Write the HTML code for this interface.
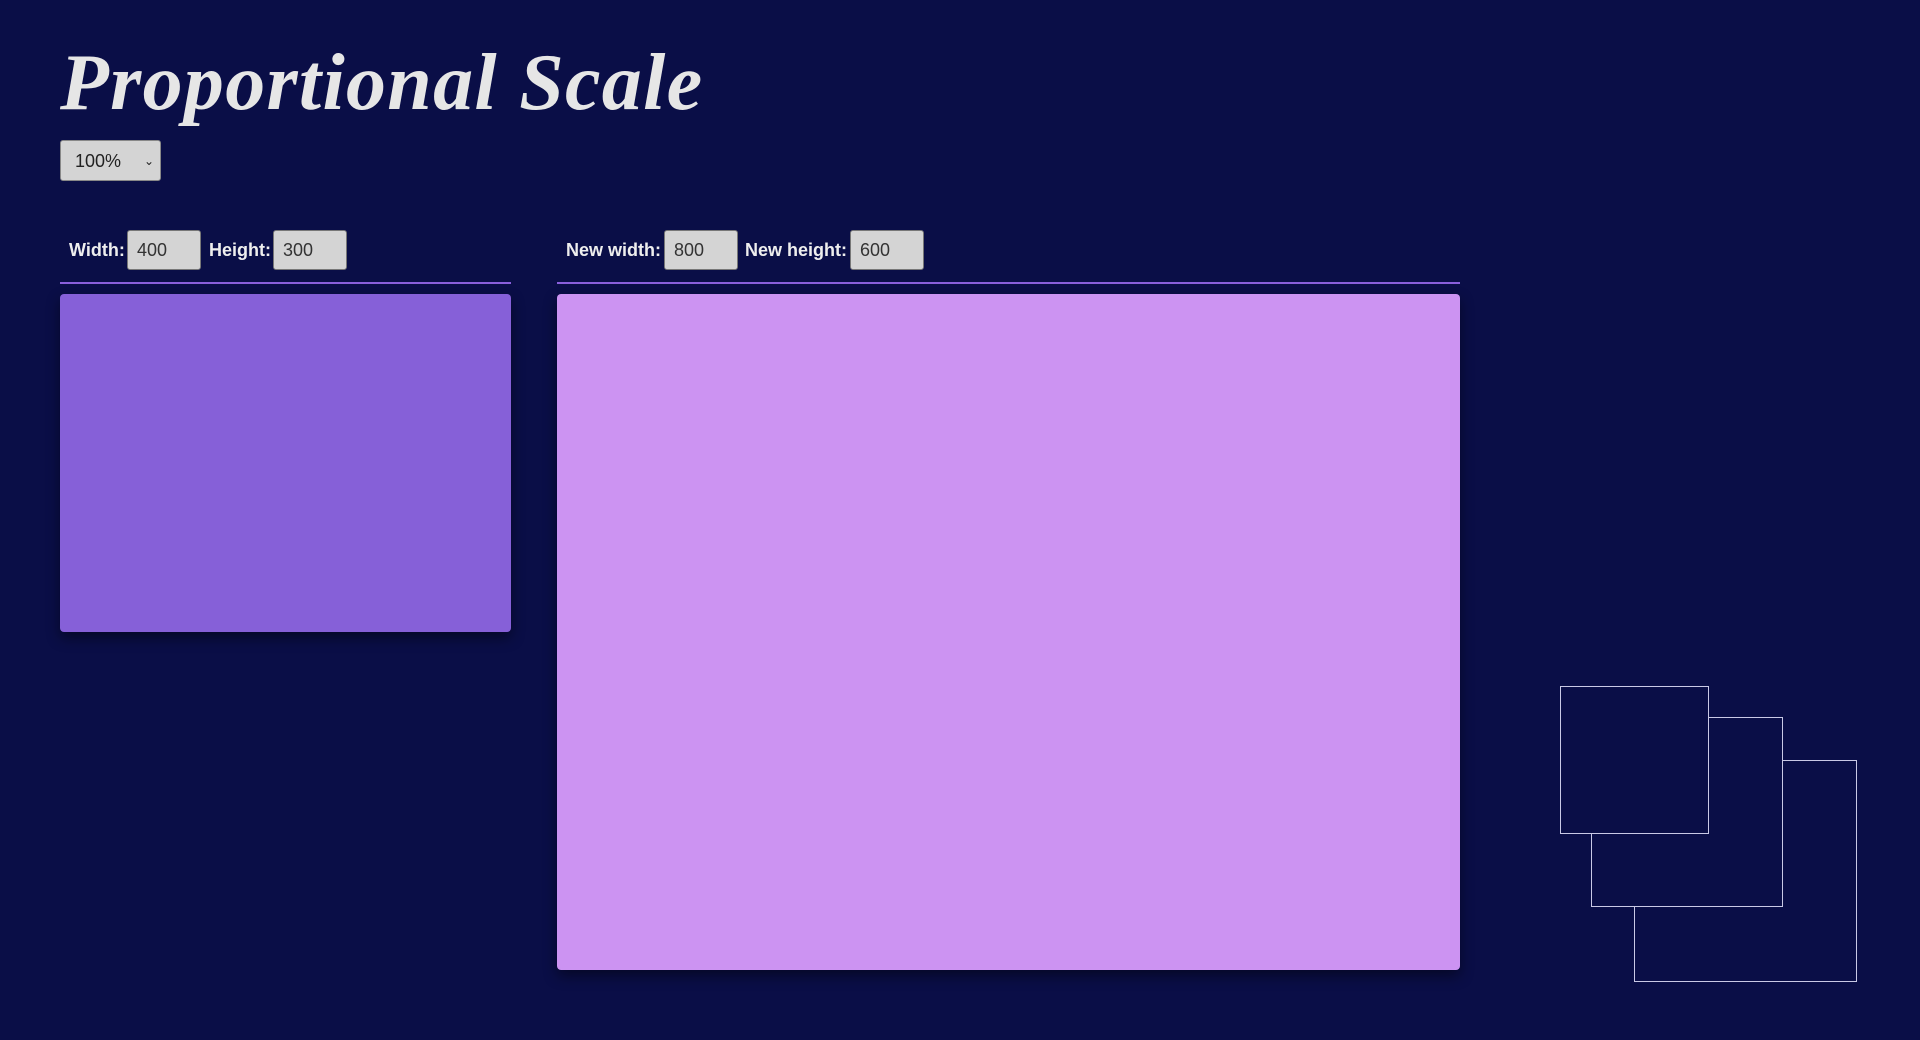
<!DOCTYPE html>
<html><head><style>
body{margin:0;width:1920px;height:1040px;background:#0a0e47;position:relative;overflow:hidden;font-family:"Liberation Sans",sans-serif}
.abs{position:absolute}
h1{position:absolute;left:60px;top:38px;margin:0;font:italic bold 80px "Liberation Serif",serif;color:#e6e6e6;letter-spacing:1.3px;white-space:nowrap}
.sel{left:60px;top:140px;width:101px;height:41px;background:#d4d4d4;border:1px solid #888;border-radius:3px;font-size:18px;color:#222;line-height:41px;box-sizing:border-box;padding-left:14px}
.lab{font-size:18px;font-weight:bold;color:#eee;top:240px}
.inp{top:230px;width:74px;height:40px;background:#d4d4d4;border:1px solid #777;border-radius:3px;box-sizing:border-box;font-size:18px;color:#333;line-height:38px;padding-left:9px}
.line{height:2px;background:#8a5fdc;top:282px}
.box{top:294px;border-radius:4px;box-shadow:0 6px 14px rgba(0,0,0,.45)}
.sq{border:1.5px solid #c9c9e6;background:#0a0e47;box-sizing:border-box}
</style></head><body>
<h1>Proportional Scale</h1>
<div class="abs sel">100%<span style="position:absolute;right:6px;top:0;font-size:12px">&#8964;</span></div>
<div class="abs lab" style="left:69px">Width:</div>
<div class="abs inp" style="left:127px">400</div>
<div class="abs lab" style="left:209px">Height:</div>
<div class="abs inp" style="left:273px">300</div>
<div class="abs lab" style="left:566px">New width:</div>
<div class="abs inp" style="left:664px">800</div>
<div class="abs lab" style="left:745px">New height:</div>
<div class="abs inp" style="left:850px">600</div>
<div class="abs line" style="left:60px;width:451px"></div>
<div class="abs line" style="left:557px;width:903px"></div>
<div class="abs box" style="left:60px;width:451px;height:338px;background:#8660d8"></div>
<div class="abs box" style="left:557px;width:903px;height:676px;background:#cc93f2"></div>
<div class="abs sq" style="left:1634px;top:760px;width:223px;height:222px"></div>
<div class="abs sq" style="left:1591px;top:717px;width:192px;height:190px"></div>
<div class="abs sq" style="left:1560px;top:686px;width:149px;height:148px"></div>
</body></html>
